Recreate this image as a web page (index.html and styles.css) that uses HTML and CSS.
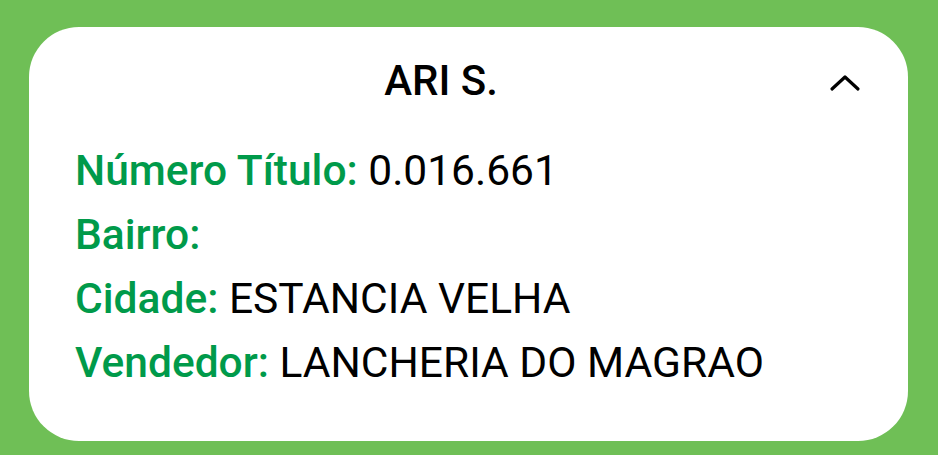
FILE: index.html
```html
<!DOCTYPE html>
<html lang="pt">
<head>
<meta charset="utf-8">
<link rel="stylesheet" href="styles.css">
</head>
<body>
<div class="page">
  <div class="card">
    <div class="header">
      <div class="title">ARI S.</div>
      <svg class="chevron" width="32" height="20" viewBox="0 0 32 20">
        <polyline points="3,16 16,4 29,16" fill="none" stroke="#000" stroke-width="3.2" stroke-linecap="round" stroke-linejoin="round"/>
      </svg>
    </div>
    <div class="rows">
      <div class="row"><span class="label">Número Título:</span> <span class="value">0.016.661</span></div>
      <div class="row"><span class="label">Bairro:</span> <span class="value"></span></div>
      <div class="row"><span class="label">Cidade:</span> <span class="value">ESTANCIA VELHA</span></div>
      <div class="row"><span class="label">Vendedor:</span> <span class="value">LANCHERIA DO MAGRAO</span></div>
    </div>
  </div>
</div>
</body>
</html>
```

FILE: styles.css
```css
html, body {
  margin: 0;
  padding: 0;
  background: #6fbf56;
  font-family: Roboto, "Liberation Sans", sans-serif;
}
.page {
  padding: 27px 30px 14px 29px;
  height: 455px;
  box-sizing: border-box;
}
.card {
  background: #fff;
  border-radius: 50px;
  height: 414px;
  box-sizing: border-box;
  padding: 0 0 0 46px;
}
.header {
  display: flex;
  align-items: flex-start;
  height: 112px;
  padding-right: 47px;
  box-sizing: border-box;
}
.title {
  flex: 1;
  text-align: center;
  font-size: 42px;
  line-height: normal;
  font-weight: 500;
  color: #000;
  padding-top: 29px;
  padding-right: 22px;
}
.chevron {
  flex: none;
  margin-top: 46px;
}
.rows {
  display: flex;
  flex-direction: column;
}
.row {
  font-size: 42.5px;
  line-height: 64px;
  color: #000;
  white-space: nowrap;
}
.label {
  color: #009a4a;
  font-weight: 500;
}
.value {
  font-weight: 400;
}
```
